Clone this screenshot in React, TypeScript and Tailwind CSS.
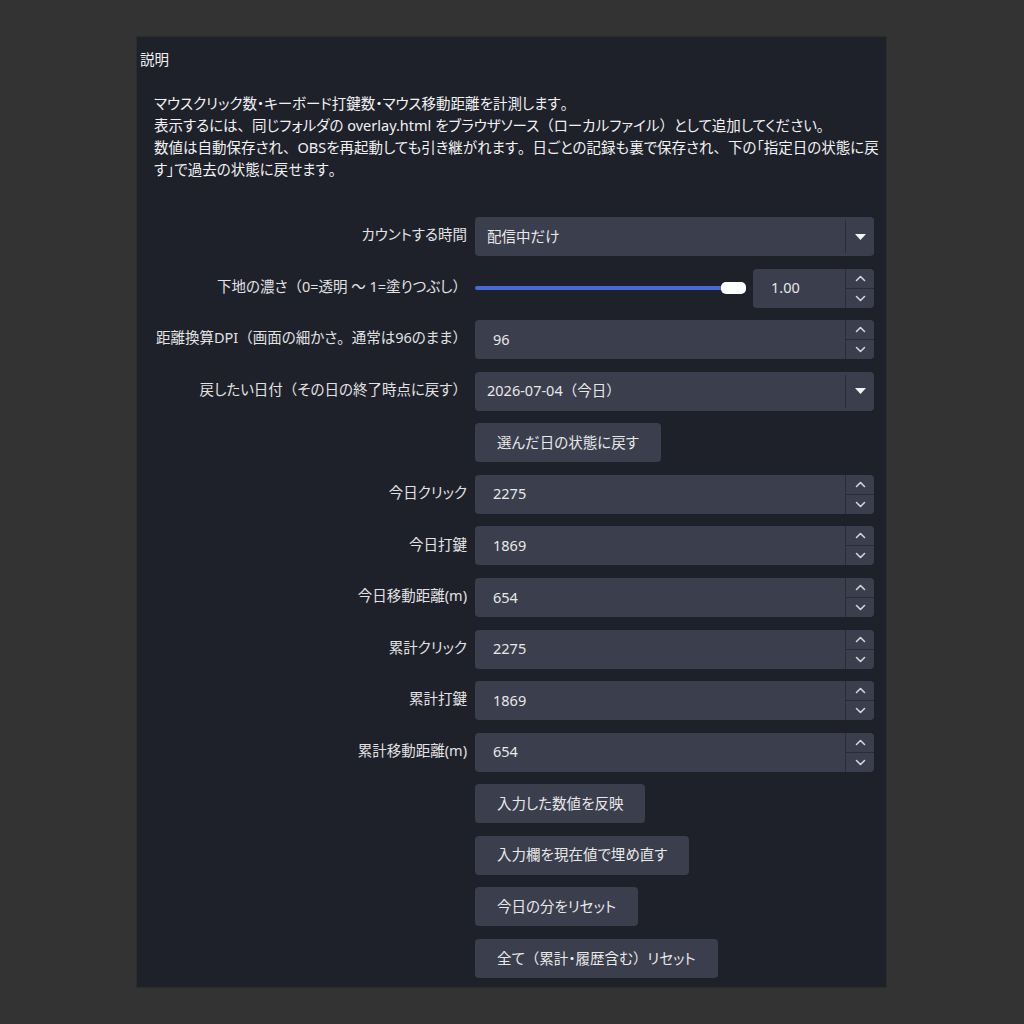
import React from 'react';

const font = "font-['Noto_Sans','Noto_Sans_CJK_JP',sans-serif] [font-feature-settings:'palt']";

// full-width punctuation keeps its full width, kana stay proportional
function T({ children }: { children: string }) {
  const parts = children.split(/([、。（）])/);
  return (
    <>
      {parts.map((p, i) =>
        /^[、。（）]$/.test(p) ? (
          <span key={i} className="[font-feature-settings:normal]">
            {p}
          </span>
        ) : (
          <React.Fragment key={i}>{p}</React.Fragment>
        )
      )}
    </>
  );
}

function Chevron({ up }: { up?: boolean }) {
  return (
    <svg width="11" height="7" viewBox="0 0 11 7" fill="none">
      <path
        d={up ? 'M1.5 5.5 L5.5 1.5 L9.5 5.5' : 'M1.5 1.5 L5.5 5.5 L9.5 1.5'}
        stroke="#d4d5da"
        strokeWidth="1.6"
        strokeLinecap="round"
        strokeLinejoin="round"
      />
    </svg>
  );
}

function SpinBox({ value, className = '' }: { value: string; className?: string }) {
  return (
    <div className={`flex h-[39px] rounded-[4px] bg-[#3b3e4c] ${className}`}>
      <div className="flex flex-1 items-center pl-[18px] text-[#e8e8ea]">{value}</div>
      <div className="flex w-[29px] flex-col border-l border-[#2a2c36]">
        <div className="flex flex-1 items-center justify-center border-b border-[#2a2c36]">
          <Chevron up />
        </div>
        <div className="flex flex-1 items-center justify-center">
          <Chevron />
        </div>
      </div>
    </div>
  );
}

function Select({ value }: { value: string }) {
  return (
    <div className="flex h-[39px] rounded-[4px] bg-[#3b3e4c]">
      <div className="flex flex-1 items-center pl-[12px] text-[#e8e8ea]">
        <T>{value}</T>
      </div>
      <div className="my-[3px] flex w-[29px] items-center justify-center border-l border-[#2a2c36]">
        <svg width="11" height="6" viewBox="0 0 11 6">
          <path d="M0 0 H11 L5.5 6 Z" fill="#f2f2f2" />
        </svg>
      </div>
    </div>
  );
}

function Btn({ children }: { children: string }) {
  return (
    <div className="flex">
      <button className="flex h-[39px] items-center rounded-[4px] bg-[#3b3e4c] px-[22px] text-[#e8e8ea]">
        <T>{children}</T>
      </button>
    </div>
  );
}

function Label({ children }: { children: string }) {
  return (
    <div className="flex h-[39px] items-center justify-end whitespace-nowrap pb-[3px] text-[#e2e2e5]">
      <T>{children}</T>
    </div>
  );
}

const numberRows = [
  { label: '今日クリック', value: '2275' },
  { label: '今日打鍵', value: '1869' },
  { label: '今日移動距離(m)', value: '654' },
  { label: '累計クリック', value: '2275' },
  { label: '累計打鍵', value: '1869' },
  { label: '累計移動距離(m)', value: '654' },
];

const buttons = ['入力した数値を反映', '入力欄を現在値で埋め直す', '今日の分をリセット', '全て（累計・履歴含む）リセット'];

const description = [
  'マウスクリック数・キーボード打鍵数・マウス移動距離を計測します。',
  '表示するには、同じフォルダの overlay.html をブラウザソース（ローカルファイル）として追加してください。',
  '数値は自動保存され、OBSを再起動しても引き継がれます。日ごとの記録も裏で保存され、下の「指定日の状態に戻',
  'す」で過去の状態に戻せます。',
];

export default function App() {
  return (
    <div className={`min-h-[1024px] w-full bg-[#333333] pt-[36px] text-[14.5px] ${font}`}>
      <div className="ml-[136px] h-[952px] w-[751px] border border-[#2c2c2c] bg-[#1f212a] pl-[3px] pt-[11px]">
        <div className="leading-[22px] text-[#f0f0f2]">説明</div>

        <div className="mt-[22px] pl-[14px] leading-[22px] text-[#f2f2f4] whitespace-nowrap">
          {description.map((line) => (
            <div key={line}>
              <T>{line}</T>
            </div>
          ))}
        </div>

        <div className="mt-[37px] grid grid-cols-[327px_399px] gap-x-[8px] gap-y-[12.57px]">
          <Label>カウントする時間</Label>
          <Select value="配信中だけ" />

          <Label>下地の濃さ（0=透明 〜 1=塗りつぶし）</Label>
          <div className="flex items-center gap-[7px]">
            <div className="relative flex h-[39px] flex-1 items-center">
              <div className="h-[4px] w-full rounded-full bg-[#476bd6]" />
              <div className="absolute right-0 h-[12px] w-[25px] rounded-[5px] bg-white" />
            </div>
            <SpinBox value="1.00" className="w-[121px]" />
          </div>

          <Label>距離換算DPI（画面の細かさ。通常は96のまま）</Label>
          <SpinBox value="96" />

          <Label>戻したい日付（その日の終了時点に戻す）</Label>
          <Select value="2026-07-04（今日）" />

          <div />
          <Btn>選んだ日の状態に戻す</Btn>

          {numberRows.map((r) => (
            <React.Fragment key={r.label}>
              <Label>{r.label}</Label>
              <SpinBox value={r.value} />
            </React.Fragment>
          ))}

          {buttons.map((b) => (
            <React.Fragment key={b}>
              <div />
              <Btn>{b}</Btn>
            </React.Fragment>
          ))}
        </div>
      </div>
    </div>
  );
}
